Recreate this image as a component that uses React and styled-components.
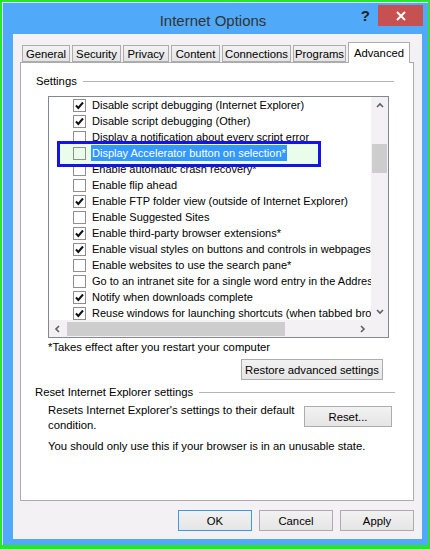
import React from 'react';
import styled, { createGlobalStyle } from 'styled-components';

const GlobalStyle = createGlobalStyle`
  html, body {
    margin: 0;
    padding: 0;
    background: #2ae62a;
  }
  body {
    font-family: "Liberation Sans", Arial, sans-serif;
  }
  * {
    box-sizing: border-box;
  }
`;

const Frame = styled.div`
  width: 430px;
  height: 549px;
  border: 2px solid #2ae62a;
  border-bottom-width: 4px;
  display: flex;
`;

const Window = styled.div`
  flex: 1;
  display: flex;
  flex-direction: column;
  background: #50aaf9;
  border-top: 1px solid #d9ecfd;
  border-left: 1px solid #d9ecfd;
`;

const TitleBar = styled.div`
  height: 31px;
  flex-shrink: 0;
  display: grid;
  grid-template-columns: 1fr auto 1fr;
  align-items: start;
  padding-right: 5px;
`;

const Title = styled.div`
  grid-column: 2;
  font-size: 15px;
  line-height: 28px;
  padding-top: 4px;
  color: #333;
`;

const Controls = styled.div`
  grid-column: 3;
  justify-self: end;
  display: flex;
  align-items: center;
  margin-top: 2px;
`;

const HelpGlyph = styled.span`
  font-size: 15px;
  font-weight: bold;
  color: #222;
  margin-right: 8px;
`;

const CloseButton = styled.div`
  width: 45px;
  height: 21px;
  background: #c75050;
  display: flex;
  align-items: center;
  justify-content: center;
`;

const Body = styled.div`
  flex: 1;
  margin: 0 6px 6px 10px;
  background: #f4f1f5;
  display: flex;
  flex-direction: column;
  padding: 9px 8px 8px 7px;
`;

const Tabs = styled.div`
  display: flex;
  align-items: flex-end;
  gap: 2px;
  height: 19px;
  padding-left: 2px;
  position: relative;
  z-index: 1;
`;

const Tab = styled.div`
  width: ${p => p.$w}px;
  height: ${p => (p.$active ? 21 : 17)}px;
  margin-bottom: ${p => (p.$active ? -1 : 0)}px;
  border: 1px solid #acacac;
  border-bottom: ${p => (p.$active ? 'none' : '1px solid #acacac')};
  background: ${p => (p.$active ? '#fff' : 'linear-gradient(#f2f2f2, #e4e4e4)')};
  font-size: 11.3px;
  color: #000;
  display: flex;
  align-items: center;
  justify-content: center;
`;

const Panel = styled.div`
  flex: 1;
  background: #fff;
  border: 1px solid #acacac;
  display: flex;
  flex-direction: column;
  font-size: 11.3px;
  color: #000;
`;

const GroupHeader = styled.div`
  display: flex;
  align-items: center;
  gap: 6px;
  height: 14px;
  margin-top: ${p => p.$top}px;
  padding-left: ${p => p.$left}px;
  padding-right: ${p => p.$right}px;
`;

const GroupLine = styled.div`
  flex: 1;
  height: 1px;
  background: #b4b4b4;
`;

const ListBox = styled.div`
  position: relative;
  margin: 8px 0 0 27px;
  width: 341px;
  height: 242px;
  border: 1px solid #828790;
  display: grid;
  grid-template-columns: 1fr 17px;
  grid-template-rows: 1fr 17px;
  background: #fff;
`;

const Rows = styled.div`
  overflow: hidden;
  font-size: 11px;
`;

const Row = styled.div`
  height: 16px;
  display: flex;
  align-items: center;
  padding-left: 24px;
  white-space: nowrap;
  position: ${p => (p.$selected ? 'relative' : 'static')};
  z-index: ${p => (p.$selected ? 2 : 'auto')};
`;

const Box = styled.span`
  width: 13px;
  height: 13px;
  flex-shrink: 0;
  border: 1px solid #8e8f8f;
  margin-right: 5px;
  display: flex;
  align-items: center;
  justify-content: center;
`;

const Label = styled.span`
  height: 16px;
  line-height: 16px;
  padding: 0 1px;
  background: ${p => (p.$selected ? '#3399ff' : 'transparent')};
  color: ${p => (p.$selected ? '#fff' : '#000')};
`;

const VScroll = styled.div`
  background: #f4f1f4;
  display: flex;
  flex-direction: column;
  align-items: center;
`;

const HScroll = styled.div`
  background: #f4f1f4;
  display: flex;
  align-items: center;
`;

const Corner = styled.div`
  background: #f4f1f4;
`;

const ArrowCell = styled.div`
  width: 17px;
  height: 17px;
  flex-shrink: 0;
  display: flex;
  align-items: center;
  justify-content: center;
`;

const VThumb = styled.div`
  width: 15px;
  height: 29px;
  background: #cdcdcd;
  margin-top: 30px;
`;

const HThumb = styled.div`
  width: 218px;
  height: 14px;
  background: #cdcdcd;
  margin-left: 1px;
`;

const Spacer = styled.div`
  flex: 1;
`;

const Highlight = styled.div`
  position: absolute;
  left: 8px;
  top: 44px;
  width: 264px;
  height: 26px;
  border: 3px solid #1414e6;
  background: #eafcea;
  z-index: 1;
`;

const Note = styled.div`
  margin: 2px 0 0 27px;
  line-height: 14px;
`;

const Button = styled.div`
  width: ${p => p.$w}px;
  height: 21px;
  border: 1px solid ${p => (p.$default ? '#3c9ae6' : '#acacac')};
  background: linear-gradient(#f2f2f2, #e5e5e5);
  display: flex;
  align-items: center;
  justify-content: center;
  font-size: 11.3px;
  color: #000;
  flex-shrink: 0;
`;

const RightButton = styled(Button)`
  align-self: flex-end;
  margin: 5px 30px 0 0;
`;

const ResetRow = styled.div`
  display: flex;
  align-items: flex-start;
  margin: 4px 21px 0 27px;
`;

const ResetText = styled.div`
  flex: 1;
  line-height: 15px;
  max-width: 250px;
`;

const ResetButton = styled(Button)`
  margin-left: auto;
  margin-top: 3px;
`;

const Warning = styled.div`
  margin: 6px 0 0 27px;
  line-height: 14px;
`;

const Footer = styled.div`
  display: flex;
  justify-content: flex-end;
  gap: 7px;
  margin-top: 9px;
`;

const Check = () => (
  <svg width="9" height="9" viewBox="0 0 9 9">
    <polyline points="1,4.5 3.3,7 8,1.5" fill="none" stroke="#111" strokeWidth="2" />
  </svg>
);

const Chevron = ({ dir }) => {
  const pts = {
    up: '1,5 4,2 7,5',
    down: '1,2 4,5 7,2',
    left: '5,1 2,4 5,7',
    right: '2,1 5,4 2,7',
  }[dir];
  return (
    <svg width="8" height="8" viewBox="0 0 8 8">
      <polyline points={pts} fill="none" stroke="#5f5f5f" strokeWidth="1.6" />
    </svg>
  );
};

const settings = [
  { text: 'Disable script debugging (Internet Explorer)', on: true },
  { text: 'Disable script debugging (Other)', on: true },
  { text: 'Display a notification about every script error', on: false },
  { text: 'Display Accelerator button on selection*', on: false, selected: true },
  { text: 'Enable automatic crash recovery*', on: false },
  { text: 'Enable flip ahead', on: false },
  { text: 'Enable FTP folder view (outside of Internet Explorer)', on: true },
  { text: 'Enable Suggested Sites', on: false },
  { text: 'Enable third-party browser extensions*', on: true },
  { text: 'Enable visual styles on buttons and controls in webpages', on: true },
  { text: 'Enable websites to use the search pane*', on: false },
  { text: 'Go to an intranet site for a single word entry in the Address bar', on: false },
  { text: 'Notify when downloads complete', on: true },
  { text: 'Reuse windows for launching shortcuts (when tabbed browsing is off)', on: true },
];

const tabs = [
  { name: 'General', w: 48 },
  { name: 'Security', w: 49 },
  { name: 'Privacy', w: 46 },
  { name: 'Content', w: 49 },
  { name: 'Connections', w: 69 },
  { name: 'Programs', w: 53 },
  { name: 'Advanced', w: 62, active: true },
];

export default function App() {
  return (
    <Frame>
      <GlobalStyle />
      <Window>
        <TitleBar>
          <Title>Internet Options</Title>
          <Controls>
            <HelpGlyph>?</HelpGlyph>
            <CloseButton>
              <svg width="10" height="10" viewBox="0 0 10 10">
                <path d="M1 1 L9 9 M9 1 L1 9" stroke="#fff" strokeWidth="2" />
              </svg>
            </CloseButton>
          </Controls>
        </TitleBar>

        <Body>
          <Tabs>
            {tabs.map(t => (
              <Tab key={t.name} $w={t.w} $active={t.active}>
                {t.name}
              </Tab>
            ))}
          </Tabs>

          <Panel>
            <GroupHeader $top={11} $left={15} $right={19}>
              <span>Settings</span>
              <GroupLine />
            </GroupHeader>

            <ListBox>
              <Rows>
                {settings.map(s => (
                  <Row key={s.text} $selected={s.selected}>
                    <Box>{s.on && <Check />}</Box>
                    <Label $selected={s.selected}>{s.text}</Label>
                  </Row>
                ))}
              </Rows>
              <VScroll>
                <ArrowCell>
                  <Chevron dir="up" />
                </ArrowCell>
                <VThumb />
                <Spacer />
                <ArrowCell>
                  <Chevron dir="down" />
                </ArrowCell>
              </VScroll>
              <HScroll>
                <ArrowCell>
                  <Chevron dir="left" />
                </ArrowCell>
                <HThumb />
                <Spacer />
                <ArrowCell>
                  <Chevron dir="right" />
                </ArrowCell>
              </HScroll>
              <Corner />
              <Highlight />
            </ListBox>

            <Note>*Takes effect after you restart your computer</Note>
            <RightButton $w={142}>Restore advanced settings</RightButton>

            <GroupHeader $top={5} $left={14} $right={18}>
              <span>Reset Internet Explorer settings</span>
              <GroupLine />
            </GroupHeader>

            <ResetRow>
              <ResetText>Resets Internet Explorer's settings to their default condition.</ResetText>
              <ResetButton $w={88}>Reset...</ResetButton>
            </ResetRow>

            <Warning>You should only use this if your browser is in an unusable state.</Warning>
          </Panel>

          <Footer>
            <Button $w={74} $default>OK</Button>
            <Button $w={74}>Cancel</Button>
            <Button $w={74}>Apply</Button>
          </Footer>
        </Body>
      </Window>
    </Frame>
  );
}
